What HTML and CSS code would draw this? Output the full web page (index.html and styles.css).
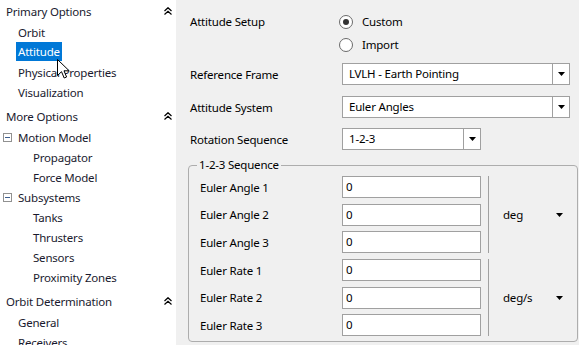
FILE: index.html
```html
<html><head>
<title>Attitude</title>
<link rel="stylesheet" href="styles.css">
</head><body>

<div class="app">

<div class="nav">
  <div class="section">
    <div class="head">Primary Options <svg class="chev" width="8" height="8" viewBox="0 0 8 8"><path d="M0.5 4L4 0.7L7.5 4M0.5 7.5L4 4.2L7.5 7.5"/></svg></div>
    <div class="item">Orbit</div>
    <div class="item"><span class="sel">Attitude</span></div>
    <div class="item">Physical Properties</div>
    <div class="item">Visualization</div>
  </div>
  <div class="section">
    <div class="head">More Options <svg class="chev" width="8" height="8" viewBox="0 0 8 8"><path d="M0.5 4L4 0.7L7.5 4M0.5 7.5L4 4.2L7.5 7.5"/></svg></div>
    <div class="item tree"><span class="box"></span>Motion Model</div>
    <div class="item sub">Propagator</div>
    <div class="item sub">Force Model</div>
    <div class="item tree"><span class="box"></span>Subsystems</div>
    <div class="item sub">Tanks</div>
    <div class="item sub">Thrusters</div>
    <div class="item sub">Sensors</div>
    <div class="item sub">Proximity Zones</div>
  </div>
  <div class="section">
    <div class="head">Orbit Determination <svg class="chev" width="8" height="8" viewBox="0 0 8 8"><path d="M0.5 4L4 0.7L7.5 4M0.5 7.5L4 4.2L7.5 7.5"/></svg></div>
    <div class="item">General</div>
    <div class="item">Receivers</div>
  </div>
</div>

<div class="main">
  <div class="setup">
    <div class="label">Attitude Setup</div>
    <div class="radios">
      <div class="radio"><span class="circle on"></span>Custom</div>
      <div class="radio"><span class="circle"></span>Import</div>
    </div>
  </div>

  <div class="field first">
    <div class="label">Reference Frame</div>
    <div class="select wide"><span class="value">LVLH - Earth Pointing</span><span class="btn"><svg width="7" height="4" viewBox="0 0 7 4"><path d="M0 0H7L3.5 4Z"/></svg></span></div>
  </div>
  <div class="field">
    <div class="label">Attitude System</div>
    <div class="select wide"><span class="value">Euler Angles</span><span class="btn"><svg width="7" height="4" viewBox="0 0 7 4"><path d="M0 0H7L3.5 4Z"/></svg></span></div>
  </div>
  <div class="field third">
    <div class="label">Rotation Sequence</div>
    <div class="select short"><span class="value">1-2-3</span><span class="btn"><svg width="7" height="4" viewBox="0 0 7 4"><path d="M0 0H7L3.5 4Z"/></svg></span></div>
  </div>

  <fieldset class="group">
    <legend>1-2-3 Sequence</legend>
    <div class="block">
      <div class="rows">
        <div class="row"><div class="glabel">Euler Angle 1</div><div class="input">0</div></div>
        <div class="row"><div class="glabel">Euler Angle 2</div><div class="input">0</div></div>
        <div class="row"><div class="glabel">Euler Angle 3</div><div class="input">0</div></div>
      </div>
      <div class="unit"><span>deg</span><svg width="7" height="4" viewBox="0 0 7 4"><path d="M0 0H7L3.5 4Z"/></svg></div>
    </div>
    <div class="block second">
      <div class="rows">
        <div class="row"><div class="glabel">Euler Rate 1</div><div class="input">0</div></div>
        <div class="row"><div class="glabel">Euler Rate 2</div><div class="input">0</div></div>
        <div class="row"><div class="glabel">Euler Rate 3</div><div class="input">0</div></div>
      </div>
      <div class="unit"><span>deg/s</span><svg width="7" height="4" viewBox="0 0 7 4"><path d="M0 0H7L3.5 4Z"/></svg></div>
    </div>
  </fieldset>
</div>

</div>

<svg class="cursor" width="13" height="20" viewBox="0 0 13 20"><path d="M0.5 0.5V16.5L4.5 12.7L7.2 19L9.6 18L7 11.8H12.2Z"/></svg>

</body></html>
```

FILE: styles.css
```css
body {
  margin:0;
  font-family:"Segoe UI", "Noto Sans", sans-serif;
  font-size:11.5px;
  letter-spacing:-0.2px;
  color:#000000;
  overflow:hidden;
}
.app {
  display:flex;
  width:579px;
  height:345px;
}

/* left navigation */
.nav {
  width:176px;
  flex:none;
  background-color:#ffffff;
  overflow:hidden;
}
.section {
  margin-top:3px;
}
.section:first-child {
  margin-top:0;
}
.head {
  display:flex;
  align-items:center;
  justify-content:space-between;
  height:22px;
  padding-left:6px;
  padding-right:4px;
  color:#1a1a2e;
}
.chev {
  fill:none;
  stroke:#000000;
  stroke-width:1.2;
}
.item {
  height:20px;
  line-height:22px;
  padding-left:18px;
  color:#1a1a2e;
  white-space:nowrap;
}
.item.sub {
  padding-left:33px;
}
.item.tree {
  display:flex;
  align-items:center;
  padding-left:3px;
  padding-top:1px;
  height:19px;
  line-height:19px;
}
.box {
  width:7px;
  height:7px;
  border:1px solid #919191;
  margin-right:6px;
}
.box:after {
  content:"";
  display:block;
  width:5px;
  height:1px;
  margin:3px 0 0 1px;
  background-color:#3d5f8f;
}
.sel {
  display:inline-block;
  line-height:19px;
  margin-left:-2px;
  padding:0 2px;
  background-color:#0078d7;
  color:#ffffff;
}

/* right panel */
.main {
  flex:1;
  background-color:#f0f0f0;
  padding:10px 1px 0 12px;
}
.label {
  width:154px;
  padding-left:2px;
  box-sizing:border-box;
  flex:none;
}
.setup {
  display:flex;
}
.setup .label {
  line-height:23px;
}
.radio {
  display:flex;
  align-items:center;
  height:23px;
}
.circle {
  width:12px;
  height:12px;
  border:1px solid #6a6a6a;
  border-radius:50%;
  background-color:#ffffff;
  margin-left:-3px;
  margin-right:9px;
  display:flex;
  align-items:center;
  justify-content:center;
}
.circle.on:after {
  content:"";
  width:6px;
  height:6px;
  border-radius:50%;
  background-color:#333333;
}
.field {
  display:flex;
  align-items:center;
  height:22px;
  margin-top:11px;
}
.field.first {
  margin-top:7px;
}
.field.third {
  margin-top:10px;
}
.select {
  display:flex;
  height:22px;
  box-sizing:border-box;
  border:1px solid #a0a0a0;
  background-color:#ffffff;
}
.select.wide {
  width:228px;
}
.select.short {
  width:139px;
}
.value {
  flex:1;
  padding-left:6px;
  line-height:20px;
}
.btn {
  width:16px;
  border-left:1px solid #a0a0a0;
  display:flex;
  align-items:center;
  justify-content:center;
}
.btn svg, .unit svg {
  fill:#000000;
}

/* group box */
.group {
  margin:8px 0 0 0;
  padding:4px 0 5px 8px;
  border:1px solid #adadad;
  border-radius:4px;
}
.group legend {
  padding:0 2px;
  line-height:14px;
}
.block {
  display:flex;
}
.block.second {
  margin-top:6px;
}
.rows {
  display:flex;
  flex-direction:column;
  gap:5.5px;
}
.row {
  display:flex;
  align-items:center;
  height:22px;
}
.glabel {
  width:145px;
  padding-left:3px;
  box-sizing:border-box;
}
.input {
  width:139px;
  height:22px;
  box-sizing:border-box;
  border:1px solid #a0a0a0;
  background-color:#ffffff;
  padding-left:3px;
  line-height:20px;
}
.unit {
  flex:1;
  display:flex;
  align-items:center;
  justify-content:space-between;
  margin-left:7px;
  padding-left:14px;
  padding-right:14px;
  border-left:1px solid #a0a0a0;
}

.cursor {
  position:absolute;
  left:57px;
  top:59px;
  fill:#ffffff;
  stroke:#000000;
  stroke-width:1;
}
```
